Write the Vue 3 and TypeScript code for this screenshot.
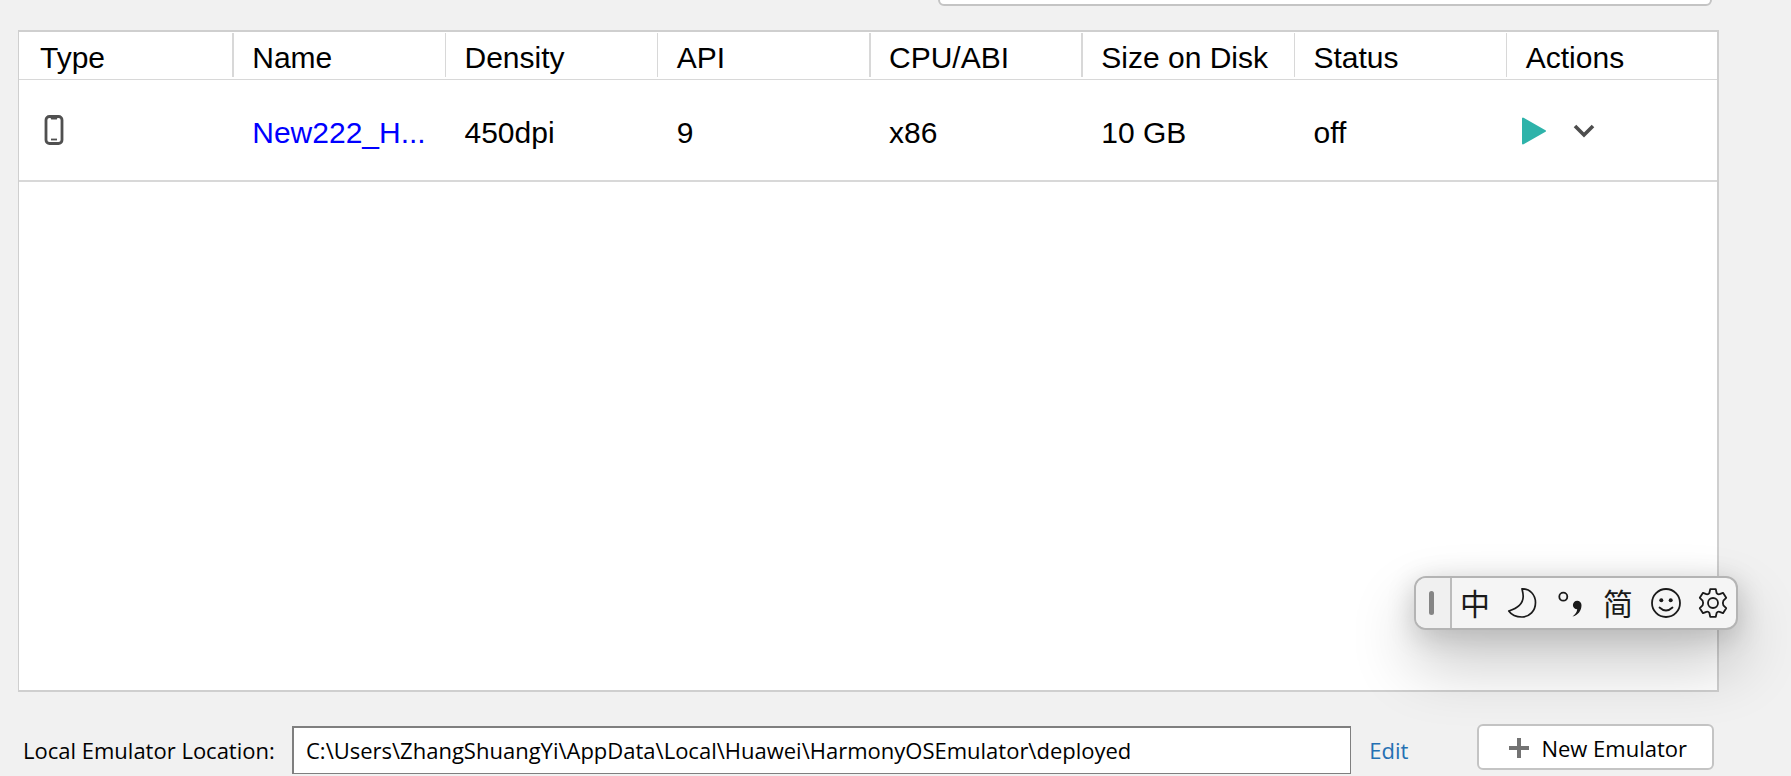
<script setup lang="ts">
import { ref } from 'vue'

interface Column {
  title: string
  divider: 'none' | 'thin' | 'thick'
}

interface Emulator {
  name: string
  density: string
  api: string
  abi: string
  size: string
  status: string
}

const columns: Column[] = [
  { title: 'Type', divider: 'none' },
  { title: 'Name', divider: 'thick' },
  { title: 'Density', divider: 'thin' },
  { title: 'API', divider: 'thin' },
  { title: 'CPU/ABI', divider: 'thick' },
  { title: 'Size on Disk', divider: 'thick' },
  { title: 'Status', divider: 'thin' },
  { title: 'Actions', divider: 'thin' },
]

const emulators: Emulator[] = [
  { name: 'New222_H...', density: '450dpi', api: '9', abi: 'x86', size: '10 GB', status: 'off' },
]

const search = ref('')
const location = ref('C:\\Users\\ZhangShuangYi\\AppData\\Local\\Huawei\\HarmonyOSEmulator\\deployed')
</script>

<template>
  <main class="page">
    <header class="topbar">
      <input v-model="search" class="search" type="text" aria-label="Search" />
    </header>

    <section class="panel">
      <table class="devices">
        <thead>
          <tr>
            <th v-for="c in columns" :key="c.title" scope="col" :class="c.divider">{{ c.title }}</th>
          </tr>
        </thead>
        <tbody>
          <tr v-for="e in emulators" :key="e.name">
            <td class="type-cell">
              <svg class="phone" viewBox="0 0 20 30" role="img" aria-label="Phone">
                <rect x="2" y="1.5" width="16" height="27" rx="3.5" fill="none" stroke="#505050" stroke-width="2.8" />
                <path d="M6 1.5h8l-1.200 3H7.200z" fill="#505050" />
                <path d="M7 24.5h6" stroke="#505050" stroke-width="1.8" />
              </svg>
            </td>
            <td><a class="name" href="#">{{ e.name }}</a></td>
            <td>{{ e.density }}</td>
            <td>{{ e.api }}</td>
            <td>{{ e.abi }}</td>
            <td>{{ e.size }}</td>
            <td>{{ e.status }}</td>
            <td class="actions-cell">
              <div class="actions">
                <button type="button" aria-label="Start">
                  <svg width="26" height="28" viewBox="0 0 26 28">
                    <path d="M2 1.5v25L24 14z" fill="#2eb3aa" stroke="#2eb3aa" stroke-width="2" stroke-linejoin="round" />
                  </svg>
                </button>
                <button type="button" aria-label="More actions">
                  <svg width="22" height="28" viewBox="0 0 22 28">
                    <path d="M2 9l9 9 9-9" fill="none" stroke="#4d4d4d" stroke-width="3.6" />
                  </svg>
                </button>
              </div>
            </td>
          </tr>
        </tbody>
      </table>
    </section>

    <footer class="footer">
      <label for="location">Local Emulator Location:</label>
      <input id="location" v-model="location" class="location" type="text" />
      <a class="edit" href="#">Edit</a>
      <button class="create" type="button">
        <svg width="20" height="20" viewBox="0 0 20 20">
          <path d="M10 0v20M0 10h20" stroke="#737373" stroke-width="4" />
        </svg>
        <span>New Emulator</span>
      </button>
    </footer>

    <div class="ime" role="toolbar" aria-label="Input method">
      <div class="grip"><i></i></div>
      <button class="glyph" type="button">中</button>
      <button type="button" aria-label="Half width">
        <svg width="30" height="32" viewBox="0 0 30 32">
          <path d="M15 1.800C23 1.500 28.500 8 28.500 15.500C28.500 24 22.500 30 15 30C9.500 30 4.500 28 1.800 24C10 21.500 16 16.500 16.200 9.500C16.200 6.500 15.500 4 15 1.800z" fill="none" stroke="#1a1a1a" stroke-width="1.7" stroke-linejoin="round" />
        </svg>
      </button>
      <button type="button" aria-label="Punctuation">
        <svg width="28" height="30" viewBox="0 0 28 30">
          <circle cx="7.3" cy="8.7" r="4" fill="none" stroke="#1a1a1a" stroke-width="1.8" />
          <path d="M16.500 28.500C19.500 26.500 21 24 21.200 21.300A4.300 4.300 0 1 1 25.500 17C25.600 22.500 22 27.500 16.500 28.500z" fill="#1a1a1a" />
        </svg>
      </button>
      <button class="glyph" type="button">简</button>
      <button type="button" aria-label="Emoji">
        <svg width="32" height="32" viewBox="0 0 32 32">
          <circle cx="16" cy="16" r="14" fill="none" stroke="#1a1a1a" stroke-width="1.8" />
          <circle cx="11.3" cy="13.2" r="2" fill="#1a1a1a" />
          <circle cx="20.7" cy="13.2" r="2" fill="#1a1a1a" />
          <path d="M9.500 20.500Q16 26.500 22.500 20.500" fill="none" stroke="#1a1a1a" stroke-width="1.8" stroke-linecap="round" />
        </svg>
      </button>
      <button type="button" aria-label="Settings">
        <svg width="32" height="32" viewBox="0 0 32 32">
          <path d="M13.200 2.200H18.800L19.600 6Q20.500 7.600 22.600 7.200L26 5.800L29.200 10.800L26.400 13.600Q25.300 16 26.400 18.400L29.200 21.200L26 26.200L22.600 24.800Q20.500 24.400 19.600 26L18.800 29.800H13.200L12.400 26Q11.500 24.400 9.400 24.800L6 26.200L2.800 21.200L5.600 18.400Q6.700 16 5.600 13.600L2.800 10.800L6 5.800L9.400 7.200Q11.500 7.600 12.400 6z" fill="none" stroke="#1a1a1a" stroke-width="1.8" stroke-linejoin="round" />
          <circle cx="16" cy="16" r="5" fill="none" stroke="#1a1a1a" stroke-width="1.8" />
        </svg>
      </button>
    </div>
  </main>
</template>

<style>
body {
  background: #f1f1f1;
}
</style>

<style scoped>
.page {
  position: relative;
  box-sizing: border-box;
  min-height: 100vh;
  display: flex;
  flex-direction: column;
  overflow: hidden;
  background: #f1f1f1;
  color: #000;
  font-family: 'Open Sans', 'Noto Sans', sans-serif;
  font-size: 22px;
}

button {
  font: inherit;
  color: inherit;
  cursor: pointer;
}

svg {
  display: block;
}

.topbar {
  height: 6px;
  padding: 0 79px 0 52%;
  display: flex;
  align-items: flex-end;
}

.search {
  box-sizing: border-box;
  flex: 1;
  margin-left: 7px;
  height: 46px;
  border: 2px solid #c4c4c4;
  border-radius: 6px;
  background: #fff;
}

.panel {
  flex: 1;
  margin: 24px 72px 0 18px;
  border: 2px solid #cfcfcf;
  border-left-width: 1px;
  background: #fff;
}

.devices {
  width: 100%;
  table-layout: fixed;
  border-collapse: separate;
  border-spacing: 0;
  font-family: 'Liberation Sans', Arial, sans-serif;
  font-size: 30px;
  line-height: 34px;
  white-space: nowrap;
}

th {
  box-sizing: border-box;
  height: 48px;
  padding: 4px 0 0 21px;
  border-bottom: 1px solid #d8d8d8;
  font-weight: 400;
  text-align: left;
  background: linear-gradient(#d8d8d8, #d8d8d8) no-repeat 1px 1px / 0 44px;
}

th.thin {
  background-size: 1px 44px;
}

th.thick {
  background-size: 2px 44px;
}

td {
  box-sizing: border-box;
  height: 102px;
  padding: 6px 0 0 21px;
  border-bottom: 2px solid #d8d8d8;
  vertical-align: middle;
}

td.type-cell {
  padding: 0 0 0 25px;
}

.phone {
  width: 20px;
  height: 30px;
}

.name {
  color: #00f;
  text-decoration: none;
}

td.actions-cell {
  padding: 2px 0 0 16px;
}

.actions {
  display: flex;
  gap: 26px;
}

.actions button {
  padding: 0;
  border: 0;
  background: none;
}

.footer {
  display: flex;
  align-items: center;
  padding: 32px 77px 0 23px;
  line-height: 30px;
}

.footer label {
  width: 269px;
  white-space: nowrap;
}

.location {
  box-sizing: border-box;
  flex: 1;
  min-width: 0;
  height: 48px;
  padding: 0 12px 2px;
  border: solid #7f7f7f;
  border-width: 2px 1px 1px 2px;
  background: #fff;
  color: #000;
  font: inherit;
}

.edit {
  margin: 0 69px 0 18px;
  color: #2470b3;
  text-decoration: none;
}

.create {
  box-sizing: border-box;
  height: 46px;
  margin-bottom: 6px;
  padding: 2px 25px 0 30px;
  display: flex;
  align-items: center;
  gap: 12px;
  border: 2px solid #c4c4c4;
  border-radius: 6px;
  background: #fff;
  white-space: nowrap;
}

.ime {
  position: absolute;
  top: 576px;
  right: 53px;
  box-sizing: border-box;
  height: 54px;
  display: flex;
  border: 2px solid #b4b4b4;
  border-radius: 12px;
  background: #f5f5f5;
  box-shadow: 0 32px 64px rgba(0, 0, 0, 0.24), 0 6px 28px rgba(0, 0, 0, 0.18);
  color: #1a1a1a;
  font-family: 'Noto Sans CJK SC', sans-serif;
  font-size: 30px;
}

.grip {
  box-sizing: border-box;
  width: 36px;
  padding-right: 4px;
  display: flex;
  align-items: center;
  justify-content: center;
  border-right: 2px solid #bcbcbc;
  border-radius: 10px 0 0 10px;
  background: #f0f0f0;
}

.grip i {
  width: 5px;
  height: 24px;
  border-radius: 3px;
  background: #858585;
}

.ime button {
  width: 48px;
  height: 50px;
  padding: 0;
  display: flex;
  align-items: center;
  justify-content: center;
  border: 0;
  background: none;
  line-height: 48px;
}

.ime button.glyph {
  padding-bottom: 2px;
}

.ime .grip + button,
.ime button:last-child {
  width: 46px;
}
</style>
